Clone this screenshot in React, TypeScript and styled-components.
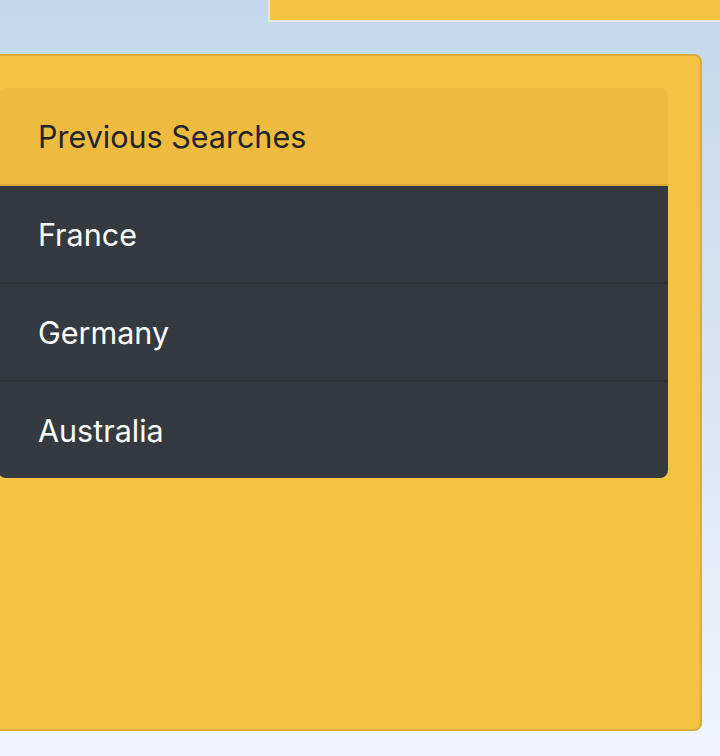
import React from 'react';
import styled, { createGlobalStyle } from 'styled-components';

const GlobalStyle = createGlobalStyle`
  html, body {
    margin: 0;
    padding: 0;
  }
  body {
    min-height: 756px;
    overflow: hidden;
    background: linear-gradient(180deg, #c2d8ec 0%, #dae6f3 55%, #f1f5fb 100%);
    font-family: Inter, "Noto Sans", "Liberation Sans", sans-serif;
  }
`;

const Page = styled.div`
  display: flex;
  flex-direction: column;
  height: 756px;
`;

const TopBox = styled.div`
  height: 20px;
  margin-left: 268px;
  background: #f5c342;
  border-left: 2px solid #e9e6df;
  border-bottom: 2px solid #e9e6df;
`;

const Card = styled.div`
  margin: 32px 0 0 -36px;
  width: 738px;
  height: 677px;
  box-sizing: border-box;
  padding: 32px;
  background: #f5c342;
  border: 2px solid #d8ab3b;
  border-radius: 8px;
`;

const ListGroup = styled.ul`
  list-style: none;
  margin: 0;
  padding: 0;
  border-radius: 8px;
  overflow: hidden;
`;

const Item = styled.li<{ header?: boolean }>`
  padding: 25px 40px 23px;
  font-size: 30.5px;
  line-height: 48px;
  height: 48px;
  background: ${({ header }) => (header ? '#eebb3f' : '#343a40')};
  color: ${({ header }) => (header ? '#212529' : '#ffffff')};
  border-bottom: 2px solid ${({ header }) => (header ? '#d9a93a' : '#2d3237')};

  &:last-child {
    border-bottom: none;
  }
`;

const searches = ['France', 'Germany', 'Australia'];

export default function App() {
  return (
    <Page>
      <GlobalStyle />
      <TopBox />
      <Card>
        <ListGroup>
          <Item header>Previous Searches</Item>
          {searches.map((s) => (
            <Item key={s}>{s}</Item>
          ))}
        </ListGroup>
      </Card>
    </Page>
  );
}
